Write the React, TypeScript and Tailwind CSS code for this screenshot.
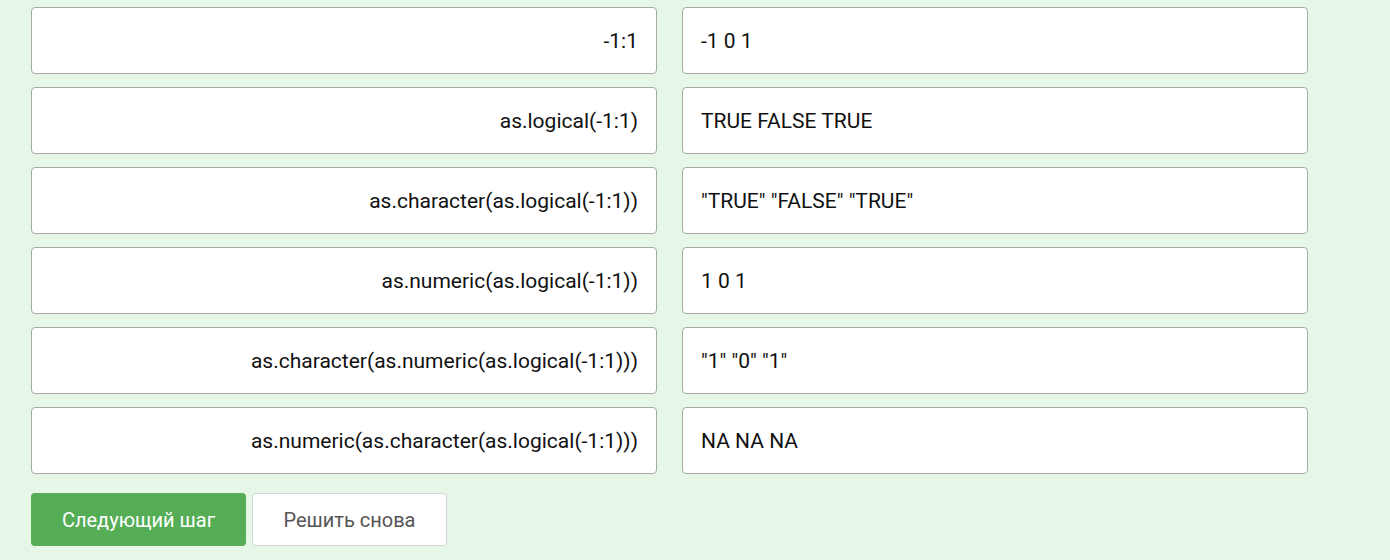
const rows = [
  { expr: '-1:1', value: '-1 0 1' },
  { expr: 'as.logical(-1:1)', value: 'TRUE FALSE TRUE' },
  { expr: 'as.character(as.logical(-1:1))', value: '"TRUE" "FALSE" "TRUE"' },
  { expr: 'as.numeric(as.logical(-1:1))', value: '1 0 1' },
  { expr: 'as.character(as.numeric(as.logical(-1:1)))', value: '"1" "0" "1"' },
  { expr: 'as.numeric(as.character(as.logical(-1:1)))', value: 'NA NA NA' },
];

export default function App() {
  return (
    <div className="min-h-[560px] w-full bg-[#e6f7e8] pt-[7px] pl-[31px] font-['Roboto',sans-serif] text-[#111]">
      <div className="flex w-[1277px] flex-col gap-[13px]">
        {rows.map((r) => (
          <div key={r.expr} className="grid grid-cols-2 gap-[25px]">
            <div className="flex h-[67px] items-center justify-end rounded-[4px] border border-[#a9a9a9] bg-white px-[18px] pt-[2px] text-[21px]">
              {r.expr}
            </div>
            <div className="flex h-[67px] items-center rounded-[4px] border border-[#a9a9a9] bg-white px-[18px] pt-[2px] text-[21px]">
              {r.value}
            </div>
          </div>
        ))}
      </div>
      <div className="mt-[19px] flex gap-[6px]">
        <button className="h-[53px] w-[215px] rounded-[4px] bg-[#55ad56] text-[20px] text-white">
          Следующий шаг
        </button>
        <button className="h-[53px] w-[195px] rounded-[4px] border border-[#d4d4d4] bg-white text-[20px] text-[#555]">
          Решить снова
        </button>
      </div>
    </div>
  );
}
